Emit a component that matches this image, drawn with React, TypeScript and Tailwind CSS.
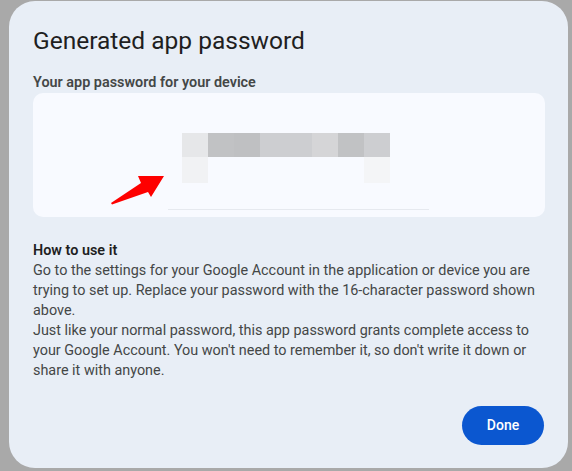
import React from 'react';

const row1 = ['#e6e7e9', '#c1c2c4', '#bfc0c2', '#cdced1', '#cdced1', '#d5d5d7', '#c1c2c4', '#cdced1'];
const row2 = ['#f1f2f4', '#f8faff', '#f8faff', '#f8faff', '#f8faff', '#f8faff', '#f8faff', '#f4f5f7'];

const App = () => {
  return (
    <div
      className="w-[572px] h-[471px] bg-[#a9a9a9] pl-[9px] pr-[4px] pt-[1px] pb-[3px]"
      style={{ fontFamily: 'Roboto, "Liberation Sans", sans-serif' }}
    >
      <div className="h-full rounded-[26px] bg-[#e8eef6] pl-[24px] pr-[23px] pt-[24px] flex flex-col">
        {/* Title */}
        <h1 className="text-[24.5px] leading-[32px] text-[#1f1f1f] font-normal">Generated app password</h1>

        <div className="mt-[16px] text-[14.4px] leading-[20px] font-semibold text-[#444746]">
          Your app password for your device
        </div>

        {/* Password box */}
        <div className="relative h-[124px] rounded-[10px] bg-[#f8faff] pl-[149px] pt-[40px]">
          <div className="grid grid-cols-[repeat(8,26px)]">
            {row1.map((c, i) => (
              <div key={'a' + i} className="h-[24px]" style={{ backgroundColor: c }} />
            ))}
            {row2.map((c, i) => (
              <div key={'b' + i} className="h-[26px]" style={{ backgroundColor: c }} />
            ))}
          </div>
          <div className="ml-[-14px] mt-[26px] h-px w-[261px] bg-[#e6e9ef]" />

          {/* annotation arrow */}
          <svg className="absolute left-[72px] top-[77px]" width="66" height="38" viewBox="0 0 66 38">
            <polygon points="6,33 36,13 33,6 59,6 46,27 43,22 7,34.5" fill="#fe0000" />
          </svg>
        </div>

        {/* How to use */}
        <div className="mt-[24px] text-[14.4px] leading-[20px] text-[#444746]">
          <div className="font-semibold text-[#1f1f1f]">How to use it</div>
          <p>
            Go to the settings for your Google Account in the application or device you are trying to set up.
            Replace your password with the 16-character password shown above.
          </p>
          <p>
            Just like your normal password, this app password grants complete access to your Google Account.
            You won't need to remember it, so don't write it down or share it with anyone.
          </p>
        </div>

        <div className="mt-[25px] flex justify-end pr-[1px]">
          <button className="h-[39px] w-[82px] rounded-full bg-[#0b57d0] text-white text-[14px] font-medium">
            Done
          </button>
        </div>
      </div>
    </div>
  );
};

export default App;
